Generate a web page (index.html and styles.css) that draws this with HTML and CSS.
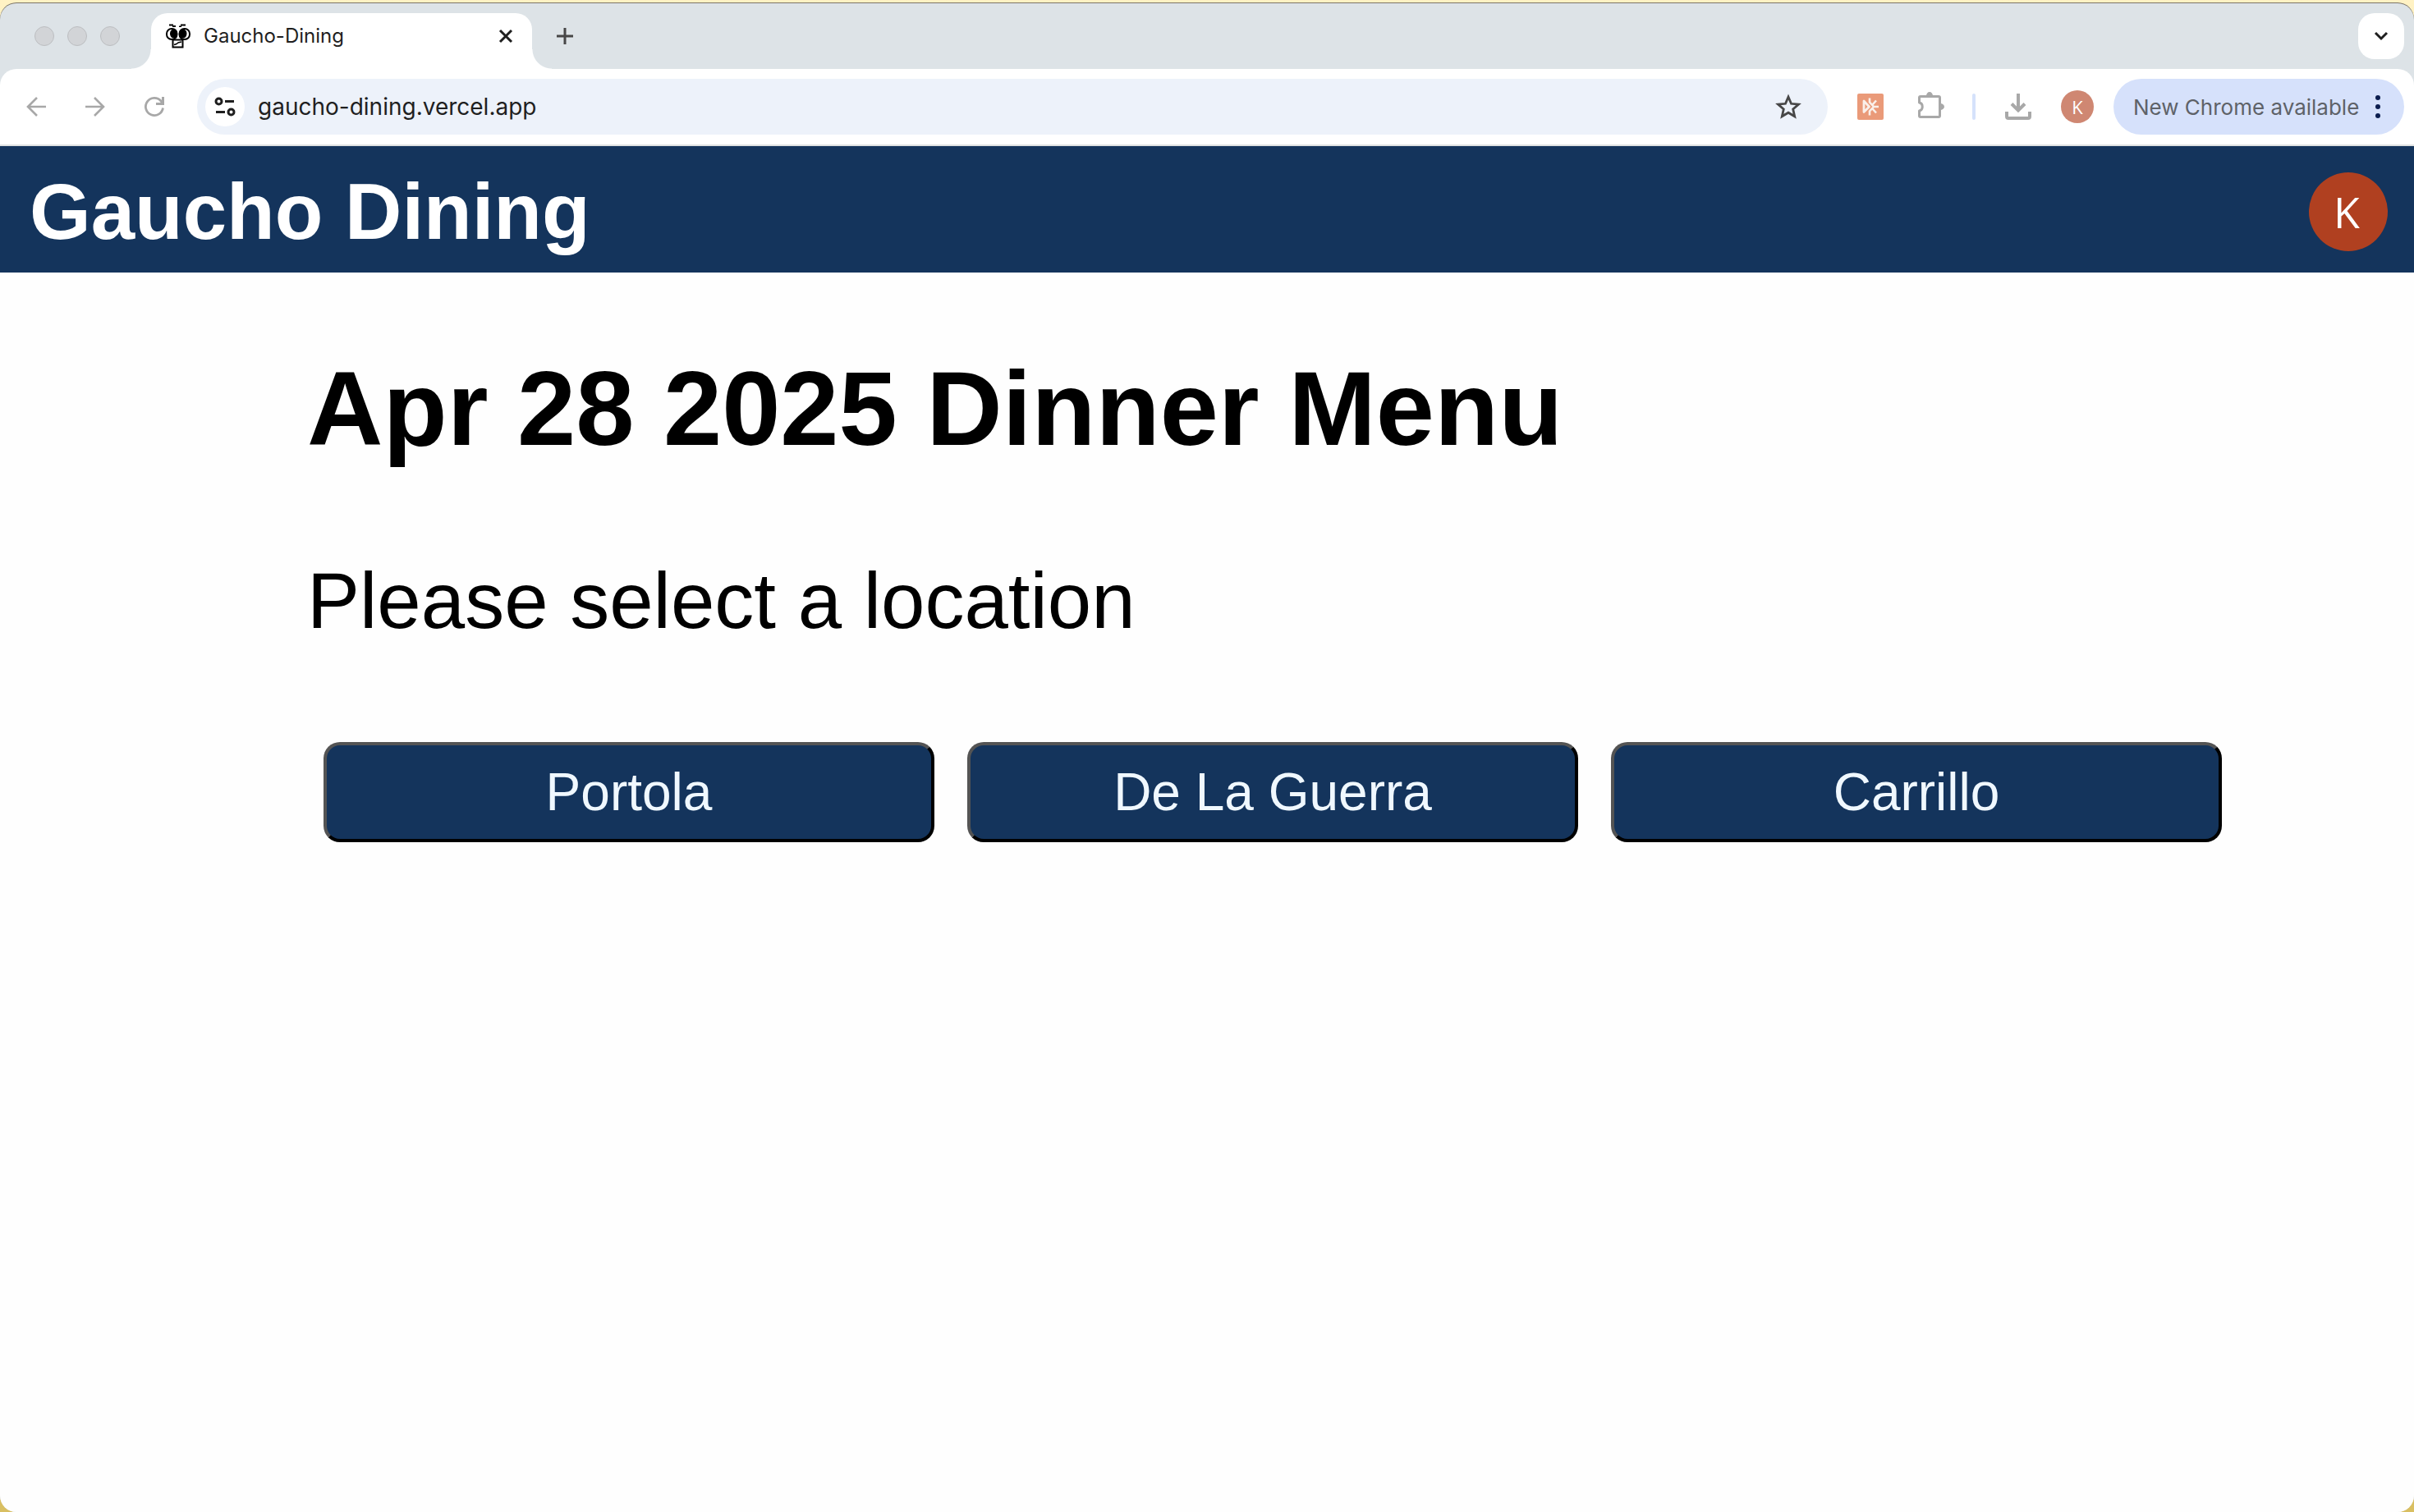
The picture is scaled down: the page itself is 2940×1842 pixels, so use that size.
FILE: index.html
```html
<!DOCTYPE html>
<html lang="en">
<head>
<meta charset="utf-8">
<meta name="viewport" content="width=device-width, initial-scale=1">
<title>Gaucho-Dining</title>
<link rel="stylesheet" href="styles.css">
</head>
<body>
<div class="window">
  <div class="tabstrip">
    <div class="lights"><span class="light"></span><span class="light"></span><span class="light"></span></div>
    <div class="tab">
      <svg class="favicon" viewBox="0 0 30 30" aria-hidden="true">
        <path d="M4 0.500h5v1.500h3v2H8V2.500H4zM16 2.500h2v-2h6v2h-5v1.500h-3z"/>
        <rect x="1" y="6" width="12.500" height="13" rx="6" fill="#fff" stroke="#000" stroke-width="2"/>
        <rect x="16.500" y="6" width="12.500" height="13" rx="6" fill="#fff" stroke="#000" stroke-width="2"/>
        <ellipse cx="9.500" cy="12" rx="4.500" ry="5.500"/>
        <ellipse cx="21" cy="12" rx="4.500" ry="5.500"/>
        <rect x="8.500" y="19.500" width="12" height="9" fill="#fff" stroke="#000" stroke-width="2"/>
        <path d="M10 25.500l3-1 2-1.500 4-1" fill="none" stroke="#000" stroke-width="1.500"/>
      </svg>
      <span class="tab-title">Gaucho-Dining</span>
      <button class="plain" aria-label="Close tab"><svg class="icon-s" viewBox="0 0 24 24"><path d="M5 5l14 14M19 5L5 19" stroke="#1f1f1f" stroke-width="3"/></svg></button>
    </div>
    <button class="plain new-tab" aria-label="New tab"><svg class="icon-s" viewBox="0 0 24 24"><path d="M12 2v20M2 12h20" stroke="#474747" stroke-width="3"/></svg></button>
    <button class="plain tab-search" aria-label="Search tabs"><svg class="icon-s" viewBox="0 0 24 24"><path d="M5 8l7 7 7-7" fill="none" stroke="#1f1f1f" stroke-width="3"/></svg></button>
  </div>

  <div class="toolbar">
    <div class="nav">
      <button class="plain" aria-label="Back"><svg class="icon" viewBox="0 0 32 32"><path d="M28 16H6M17 5L6 16l11 11" fill="none" stroke="#a8a8a8" stroke-width="2.600"/></svg></button>
      <button class="plain" aria-label="Forward"><svg class="icon" viewBox="0 0 32 32"><path d="M4 16h22M15 5l11 11-11 11" fill="none" stroke="#a8a8a8" stroke-width="2.600"/></svg></button>
      <button class="plain" aria-label="Reload"><svg class="icon" viewBox="0 0 32 32"><path d="M26.500 17.500A10.600 10.600 0 1 1 24 9l2.500 3" fill="none" stroke="#a8a8a8" stroke-width="2.800"/><path d="M28 4v10H18v-3h7V4z" fill="#a8a8a8"/></svg></button>
    </div>
    <div class="omnibox">
      <button class="plain site" aria-label="Site information"><svg class="icon" viewBox="0 0 32 32"><g fill="none" stroke="#1f1f1f" stroke-width="3"><circle cx="8.500" cy="9.500" r="3.500"/><path d="M16 9.500h11M5 22.500h11"/><circle cx="23.500" cy="22.500" r="3.500"/></g></svg></button>
      <input class="url" type="text" aria-label="Address" value="gaucho-dining.vercel.app">
      <button class="plain" aria-label="Bookmark"><svg class="icon" viewBox="0 0 32 32"><path d="M16 4l3.500 8.300 9 .8-6.800 5.900 2 8.800L16 23.200l-7.700 4.600 2-8.800-6.800-5.900 9-.8z" fill="none" stroke="#474747" stroke-width="2.800"/></svg></button>
    </div>
    <div class="actions">
      <button class="plain" aria-label="Extension"><svg class="icon" viewBox="0 0 32 32"><rect width="32" height="32" rx="2" fill="#ea9a79"/><path d="M8 9v13.500l6.500-6.500z" fill="none" stroke="#faf0ea" stroke-width="2.800" stroke-linejoin="round"/><path d="M15 5.500v5l5 5.500-5 5.500v5M19 16h7M18.500 13.500l4.500-5M18.500 18.500l4.500 5" fill="none" stroke="#faf0ea" stroke-width="2.600"/></svg></button>
      <button class="plain puzzle" aria-label="Extensions"><svg class="icon" viewBox="0 0 32 32"><path d="M1.500 11V5q0-1.500 1.500-1.500h22q1.500 0 1.500 1.500v22q0 1.500-1.500 1.500H3q-1.500 0-1.500-1.500v-6c5-1 5-9 0-10z" fill="none" stroke="#a8a8a8" stroke-width="3" stroke-linejoin="round"/><path d="M10 3a4 5 0 0 1 8 0zM27 12a5 4 0 0 1 0 8z" fill="#a8a8a8"/></svg></button>
      <span class="divider"></span>
      <button class="plain" aria-label="Downloads"><svg class="icon" viewBox="0 0 32 32"><path d="M16 0v20M8 12.500l8 8 8-8M2 22v6q0 2 2 2h24q2 0 2-2v-6" fill="none" stroke="#a8a8a8" stroke-width="4"/></svg></button>
      <button class="plain profile" aria-label="Profile">K</button>
    </div>
    <button class="plain update">New Chrome available
      <svg class="dots" viewBox="0 0 8 28" aria-hidden="true"><g fill="#0b1d4f"><circle cx="4" cy="3" r="3"/><circle cx="4" cy="14" r="3"/><circle cx="4" cy="25" r="3"/></g></svg>
    </button>
  </div>

  <header class="site-header">
    <a class="brand" href="#">Gaucho Dining</a>
    <button class="plain avatar" aria-label="Account">K</button>
  </header>

  <main class="content">
    <h1 class="heading">Apr 28 2025 Dinner Menu</h1>
    <p class="prompt">Please select a location</p>
    <div class="locations">
      <button class="location">Portola</button>
      <button class="location">De La Guerra</button>
      <button class="location">Carrillo</button>
    </div>
  </main>
</div>
</body>
</html>
```

FILE: styles.css
```css
* { box-sizing: border-box; }

body {
  margin: 0;
  min-height: 100vh;
  padding-top: 4px;
  display: flex;
  background: linear-gradient(#fff2c4, #d9bf62);
  font-family: Inter, "Liberation Sans", sans-serif;
  color: #1f1f1f;
}

.window {
  flex: 1;
  min-width: 0;
  display: flex;
  flex-direction: column;
  background: #dde3e7;
  border-radius: 20px;
  overflow: hidden;
  box-shadow: 0 -1px 0 #7a7468;
}

.plain {
  display: flex;
  align-items: center;
  justify-content: center;
  border: 0;
  padding: 0;
  background: none;
  font: inherit;
}

svg { display: block; flex: none; overflow: visible; }
.icon { width: 32px; height: 32px; }
.icon-s { width: 24px; height: 24px; }

/* Tab strip */
.tabstrip {
  display: flex;
  align-items: center;
  height: 80px;
  padding: 0 12px 0 42px;
}

.lights { display: flex; gap: 16px; }

.light {
  width: 24px;
  height: 24px;
  border-radius: 50%;
  background: #d2d4d7;
  border: 1px solid #bcbec1;
}

.tab {
  position: relative;
  align-self: flex-end;
  display: flex;
  align-items: center;
  width: 464px;
  height: 68px;
  margin-left: 38px;
  padding: 0 20px 12px 18px;
  background: #fff;
  border-radius: 20px 20px 0 0;
}

.tab::before,
.tab::after {
  content: "";
  position: absolute;
  bottom: 0;
  width: 24px;
  height: 24px;
}

.tab::before {
  right: 100%;
  background: radial-gradient(circle at 0 0, #dde3e7 23px, #fff 24px);
}

.tab::after {
  left: 100%;
  background: radial-gradient(circle at 100% 0, #dde3e7 23px, #fff 24px);
}

.favicon { width: 30px; height: 30px; }
.tab-title { flex: 1; margin-left: 16px; font-size: 24px; line-height: 32px; }
.new-tab { margin-left: 28px; }

.tab-search {
  width: 56px;
  height: 56px;
  margin-left: auto;
  border-radius: 20px;
  background: #fff;
}

/* Toolbar */
.toolbar {
  display: flex;
  align-items: center;
  height: 94px;
  padding: 0 12px 0 28px;
  background: #fff;
  border-bottom: 2px solid #dfe2e1;
  border-radius: 20px 20px 0 0;
}

.nav { display: flex; gap: 40px; }

.omnibox {
  flex: 1;
  display: flex;
  align-items: center;
  height: 68px;
  margin-left: 36px;
  padding: 0 32px 0 10px;
  border-radius: 34px;
  background: #edf2fa;
}

.site {
  width: 48px;
  height: 48px;
  border-radius: 50%;
  background: #fff;
}

.url {
  flex: 1;
  min-width: 0;
  margin-left: 16px;
  padding: 0;
  border: 0;
  background: none;
  outline: 0;
  color: #1f1f1f;
  font: 28px/36px Inter, "Liberation Sans", sans-serif;
}

.actions { display: flex; align-items: center; gap: 36px; margin-left: 36px; }
.puzzle { width: 28px; margin-left: 6px; justify-content: flex-start; }
.divider { width: 4px; height: 32px; margin-left: 2px; border-radius: 2px; background: #d5e2fb; }

.profile {
  width: 40px;
  height: 40px;
  border-radius: 50%;
  background: #cf8772;
  color: #fff;
  font: 22px/40px "Open Sans", sans-serif;
}

.update {
  justify-content: space-between;
  width: 354px;
  height: 68px;
  margin-left: 24px;
  padding: 0 28px 0 24px;
  border-radius: 34px;
  background: #d6e1fb;
  color: #5e6268;
  font-size: 26px;
  white-space: nowrap;
}

.dots { width: 8px; height: 28px; }

/* Site */
.site-header {
  display: flex;
  align-items: center;
  justify-content: space-between;
  height: 154px;
  padding: 6px 32px 0 36px;
  background: #14345c;
}

.brand {
  color: #fff;
  font: bold 96px/112px "Liberation Sans", Arial, sans-serif;
  text-decoration: none;
}

.avatar {
  width: 96px;
  height: 96px;
  padding-right: 4px;
  border-radius: 50%;
  background: #b04020;
  color: #fff;
  font: 500 52px/96px "Open Sans", sans-serif;
}

.content {
  flex: 1;
  padding: 92px 214px 92px 374px;
  background: #fefefe;
  font-family: "Liberation Sans", Arial, sans-serif;
  color: #000;
}

.heading { margin: 0; font-size: 128px; line-height: 148px; }
.prompt { margin: 104px 0 0; font-size: 96px; line-height: 112px; }

.locations {
  display: grid;
  grid-template-columns: repeat(3, 1fr);
  gap: 40px;
  margin: 116px 20px 0;
}

.location {
  height: 122px;
  padding: 0;
  border: 4px outset #000;
  border-radius: 20px;
  background: #14345c;
  color: #f0f8ff;
  font: 64px/80px "Liberation Sans", Arial, sans-serif;
}
```
